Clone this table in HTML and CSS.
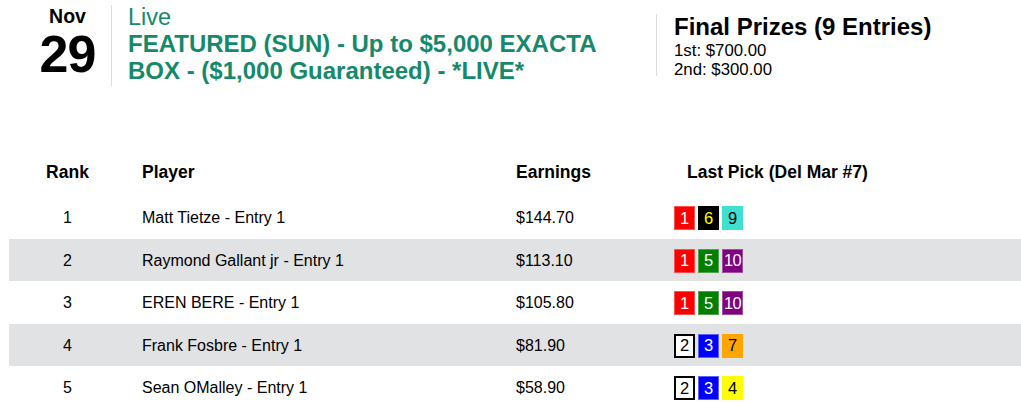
FILE: index.html
```html
<!DOCTYPE html>
<html>
<head>
<meta charset="utf-8">
<link rel="stylesheet" href="styles.css">
</head>
<body>
<header class="top">
  <div class="date">
    <div class="month">Nov</div>
    <div class="day">29</div>
  </div>
  <div class="title">
    <div class="status">Live</div>
    <div class="name">FEATURED (SUN) - Up to $5,000 EXACTA BOX - ($1,000 Guaranteed) - *LIVE*</div>
  </div>
  <div class="prizes">
    <div class="prizes-head">Final Prizes (9 Entries)</div>
    <div class="prize">1st: $700.00</div>
    <div class="prize">2nd: $300.00</div>
  </div>
</header>

<table class="board">
  <thead>
    <tr>
      <th class="c-rank">Rank</th>
      <th class="c-player">Player</th>
      <th class="c-earn">Earnings</th>
      <th class="c-pick">Last Pick (Del Mar #7)</th>
    </tr>
  </thead>
  <tbody>
    <tr>
      <td class="c-rank">1</td>
      <td class="c-player">Matt Tietze - Entry 1</td>
      <td class="c-earn">$144.70</td>
      <td class="c-pick"><span class="pp p1">1</span><span class="pp p6">6</span><span class="pp p9">9</span></td>
    </tr>
    <tr>
      <td class="c-rank">2</td>
      <td class="c-player">Raymond Gallant jr - Entry 1</td>
      <td class="c-earn">$113.10</td>
      <td class="c-pick"><span class="pp p1">1</span><span class="pp p5">5</span><span class="pp p10">10</span></td>
    </tr>
    <tr>
      <td class="c-rank">3</td>
      <td class="c-player">EREN BERE - Entry 1</td>
      <td class="c-earn">$105.80</td>
      <td class="c-pick"><span class="pp p1">1</span><span class="pp p5">5</span><span class="pp p10">10</span></td>
    </tr>
    <tr>
      <td class="c-rank">4</td>
      <td class="c-player">Frank Fosbre - Entry 1</td>
      <td class="c-earn">$81.90</td>
      <td class="c-pick"><span class="pp p2">2</span><span class="pp p3">3</span><span class="pp p7">7</span></td>
    </tr>
    <tr>
      <td class="c-rank">5</td>
      <td class="c-player">Sean OMalley - Entry 1</td>
      <td class="c-earn">$58.90</td>
      <td class="c-pick"><span class="pp p2">2</span><span class="pp p3">3</span><span class="pp p4">4</span></td>
    </tr>
  </tbody>
</table>
</body>
</html>
```

FILE: styles.css
```css
html, body {
  margin: 0;
  padding: 0;
  background: #fff;
  color: #000;
  font-family: "Liberation Sans", Arial, sans-serif;
}

body {
  padding-left: 9px;
  overflow: hidden;
}

.top {
  display: flex;
  align-items: flex-start;
  padding-top: 5px;
  height: 145px;
  box-sizing: border-box;
}

.date {
  width: 88px;
  margin-left: 15px;
  border-right: 1px solid #dcdcdc;
  text-align: center;
  height: 81px;
  box-sizing: border-box;
}

.month {
  font-weight: bold;
  font-size: 19.5px;
  line-height: 22px;
}

.day {
  font-weight: bold;
  font-size: 52px;
  line-height: 54px;
  letter-spacing: -1px;
}

.title {
  width: 500px;
  padding: 0 28px 0 16px;
  color: #15896b;
}

.status {
  font-size: 23.5px;
  line-height: 26px;
  margin-top: -1px;
}

.name {
  font-weight: bold;
  font-size: 24px;
  line-height: 27px;
}

.prizes {
  margin-top: 9px;
  border-left: 1px solid #dcdcdc;
  padding-left: 17px;
  height: 62px;
}

.prizes-head {
  font-weight: bold;
  font-size: 24px;
  line-height: 26px;
  margin-bottom: 1px;
}

.prize {
  font-size: 16.8px;
  line-height: 19px;
}

.board {
  width: 1012px;
  border-collapse: collapse;
  font-size: 16px;
}

.board th {
  font-size: 17.5px;
  font-weight: bold;
  height: 47px;
  padding: 4px 0 0 0;
  vertical-align: middle;
}

.board td {
  height: 40.5px;
  padding: 2px 0 0 0;
  vertical-align: middle;
}

.board tbody tr:nth-child(even) td {
  background: #e1e2e4;
}

.c-rank {
  width: 117px;
  text-align: center;
}

.c-player {
  width: 374px;
  text-align: left;
  padding-left: 16px !important;
}

.c-earn {
  width: 158px;
  text-align: left;
}

.board th.c-pick {
  text-align: left;
  padding-left: 13px;
}

.board td.c-pick {
  text-align: left;
}

.pp {
  display: inline-flex;
  align-items: center;
  justify-content: center;
  width: 21px;
  height: 24px;
  box-sizing: border-box;
  margin-right: 3px;
  font-size: 16.5px;
  vertical-align: middle;
  color: #fff;
}

.p1 { background: #ff0000; border: 1px solid #ff5050; }
.p2 { background: #fff; color: #000; border: 2px solid #000; }
.p3 { background: #0000ff; border: 1px solid #6060ff; }
.p4 { background: #ffff00; color: #000; }
.p5 { background: #008000; border: 1px solid #50a050; }
.p6 { background: #000; color: #ffff00; }
.p7 { background: #ffa500; color: #000; }
.p9 { background: #40e0d0; color: #000; }
.p10 { background: #800080; border: 1px solid #a050a0; letter-spacing: -0.8px; }
```
